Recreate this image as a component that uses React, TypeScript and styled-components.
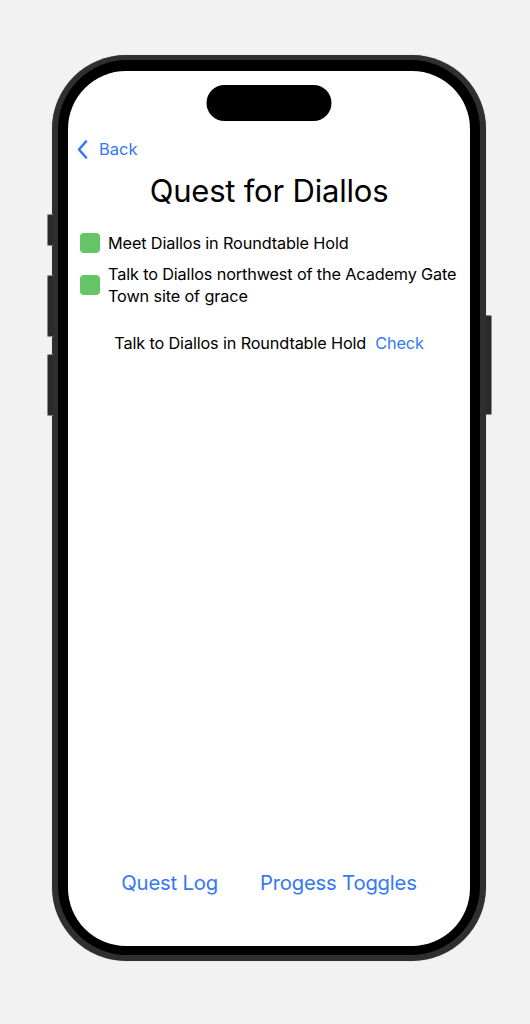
import React from "react";
import styled, { createGlobalStyle } from "styled-components";

const GlobalStyle = createGlobalStyle`
  html, body { margin: 0; padding: 0; background: #f2f2f2; }
  body { font-family: Inter, "Noto Sans", sans-serif; }
  * { box-sizing: border-box; }
`;

const Page = styled.div`
  width: 530px;
  height: 1024px;
  background: #f2f2f2;
  padding: 55px 0 0 52px;
`;

const Frame = styled.div`
  position: relative;
  width: 434px;
  height: 906px;
  border-radius: 74px;
  background: #2f2f2f;
  padding: 5px 6px 6px 6px;
  box-shadow: 0 0 1px rgba(0,0,0,0.4);
`;

const SideButton = styled.div<{ $side: "left" | "right"; $top: number; $h: number }>`
  position: absolute;
  top: ${(p) => p.$top}px;
  ${(p) => (p.$side === "left" ? "left: -5px;" : "right: -6px;")}
  width: 6px;
  height: ${(p) => p.$h}px;
  background: #2a2a2a;
  border-radius: ${(p) => (p.$side === "left" ? "2px 0 0 2px" : "0 2px 2px 0")};
  border: 1px solid #8a8a8a;
  ${(p) => (p.$side === "left" ? "border-right: none;" : "border-left: none;")}
`;

const Bezel = styled.div`
  width: 100%;
  height: 100%;
  background: #000;
  border-radius: 69px;
  padding: 11px 10px 9px 10px;
`;

const Screen = styled.div`
  position: relative;
  width: 100%;
  height: 100%;
  background: #fff;
  border-radius: 58px;
  overflow: hidden;
  display: flex;
  flex-direction: column;
  padding-top: 67px;
  padding-bottom: 49px;
`;

const Island = styled.div`
  position: absolute;
  top: 14px;
  left: 50%;
  transform: translateX(-50%);
  width: 125px;
  height: 36px;
  border-radius: 18px;
  background: #000;
`;

const NavBar = styled.div`
  display: flex;
  align-items: center;
  padding-left: 9px;
  height: 22px;
`;

const BackButton = styled.button`
  display: flex;
  align-items: center;
  gap: 11px;
  border: none;
  background: none;
  padding: 0;
  color: #3478f6;
  font-family: Inter, "Noto Sans", sans-serif;
  font-size: 16.5px;
  line-height: 22px;
  cursor: pointer;
`;

const Title = styled.h1`
  margin: 13px 0 0 0;
  text-align: center;
  font-weight: 400;
  font-size: 31px;
  line-height: 36px;
  color: #000;
  letter-spacing: -0.2px;
`;

const List = styled.div`
  display: flex;
  flex-direction: column;
  gap: 9px;
  margin-top: 23px;
  padding-left: 12px;
  padding-right: 4px;
`;

const Row = styled.div`
  display: flex;
  align-items: center;
  gap: 8px;
`;

const Box = styled.div<{ $checked: boolean }>`
  flex: none;
  width: 20px;
  height: 20px;
  border-radius: 4px;
  background: ${(p) => (p.$checked ? "#65c466" : "#e5e5ea")};
`;

const RowText = styled.span`
  font-size: 16.3px;
  line-height: 22px;
  color: #000;
  letter-spacing: -0.15px;
  white-space: nowrap;
`;

const CheckLine = styled.div`
  display: flex;
  justify-content: center;
  gap: 9px;
  margin-top: 25px;
  font-size: 16.3px;
  line-height: 22px;
  letter-spacing: -0.15px;
`;

const Plain = styled.span`
  color: #000;
`;

const Link = styled.span`
  color: #3478f6;
`;

const Spacer = styled.div`
  flex: 1;
`;

const BottomBar = styled.div`
  display: flex;
  justify-content: center;
  gap: 42px;
`;

const BottomButton = styled.button`
  border: none;
  background: none;
  padding: 0;
  color: #3478f6;
  font-family: Inter, "Noto Sans", sans-serif;
  font-size: 20.3px;
  line-height: 28px;
  letter-spacing: -0.2px;
`;

const Chevron = () => (
  <svg width="11" height="19" viewBox="0 0 11 19" fill="none">
    <path d="M9 1.5 L2 9.5 L9 17.5" stroke="#3478f6" strokeWidth="2.6" strokeLinecap="round" strokeLinejoin="round" />
  </svg>
);

export default function App() {
  return (
    <>
      <GlobalStyle />
      <Page>
        <Frame>
          <SideButton $side="left" $top={159} $h={32} />
          <SideButton $side="left" $top={220} $h={62} />
          <SideButton $side="left" $top={299} $h={62} />
          <SideButton $side="right" $top={260} $h={100} />
          <Bezel>
            <Screen>
              <Island />
              <NavBar>
                <BackButton>
                  <Chevron />
                  Back
                </BackButton>
              </NavBar>
              <Title>Quest for Diallos</Title>
              <List>
                <Row>
                  <Box $checked />
                  <RowText>Meet Diallos in Roundtable Hold</RowText>
                </Row>
                <Row>
                  <Box $checked />
                  <RowText>
                    Talk to Diallos northwest of the Academy Gate
                    <br />
                    Town site of grace
                  </RowText>
                </Row>
              </List>
              <CheckLine>
                <Plain>Talk to Diallos in Roundtable Hold</Plain>
                <Link>Check</Link>
              </CheckLine>
              <Spacer />
              <BottomBar>
                <BottomButton>Quest Log</BottomButton>
                <BottomButton>Progess Toggles</BottomButton>
              </BottomBar>
            </Screen>
          </Bezel>
        </Frame>
      </Page>
    </>
  );
}
